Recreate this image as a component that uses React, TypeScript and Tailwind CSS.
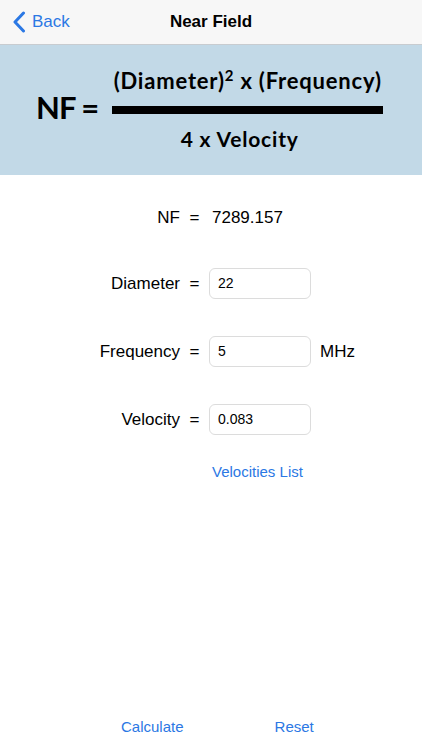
import { useState } from 'react';

const sans = { fontFamily: '"Liberation Sans", Arial, sans-serif' };

function Row({ label, value, unit }: { label: string; value: string; unit?: string }) {
  return (
    <div className="flex items-center h-[31px]">
      <div className="w-[180px] text-right text-[17px] text-black">{label}</div>
      <div className="w-[29px] text-center text-[17px] text-black">=</div>
      <div className="w-[102px] h-[31px] rounded-[6px] border border-[#dcdcdc] bg-white flex items-center px-[8px] text-[14px] text-black">
        {value}
      </div>
      {unit && <div className="ml-[9px] text-[17px] text-black">{unit}</div>}
    </div>
  );
}

export default function App() {
  const [nf] = useState('7289.157');

  return (
    <div className="w-[422px] h-[750px] bg-white flex flex-col overflow-hidden" style={sans}>
      {/* nav bar */}
      <div className="relative h-[45px] bg-[#f7f7f7] border-b border-[#c8ccd0] flex items-center">
        <div className="flex items-center pl-[12px] text-[#2b78e4] text-[17px]">
          <svg width="14" height="22" viewBox="0 0 14 22" fill="none">
            <path d="M11.5 2 L3 11 L11.5 20" stroke="#2b78e4" strokeWidth="3" strokeLinecap="round" strokeLinejoin="round" />
          </svg>
          <span className="ml-[6px]">Back</span>
        </div>
        <div className="absolute inset-x-0 top-0 h-[44px] flex items-center justify-center pointer-events-none text-[17px] font-semibold text-black">
          Near Field
        </div>
      </div>

      {/* formula banner */}
      <div
        className="h-[130px] bg-[#c2d9e7] flex items-start pl-[36px]"
        style={{ fontFamily: 'Lato, "Open Sans", sans-serif' }}
      >
        <div className="mt-[47px] text-[31px] leading-[31px] font-bold text-black tracking-[-1px]">NF =</div>
        <div className="ml-[14px] flex flex-col items-center pt-[25px]">
          <div className="text-[22px] leading-[22px] font-bold text-black tracking-[0.8px] whitespace-nowrap">
            (Diameter)<span className="text-[15px] relative -top-[8px]">2</span> x (Frequency)
          </div>
          <div className="w-[271px] h-[8px] bg-black mt-[12px]" />
          <div className="mt-[14px] mr-[16px] text-[21px] leading-[21px] font-bold text-black tracking-[0.8px]">4 x Velocity</div>
        </div>
      </div>

      {/* fields */}
      <div className="flex flex-col pt-[27px]">
        <div className="flex items-center h-[31px]">
          <div className="w-[180px] text-right text-[17px] text-black">NF</div>
          <div className="w-[29px] text-center text-[17px] text-black">=</div>
          <div className="ml-[3px] text-[17px] text-black">{nf}</div>
        </div>
        <div className="flex flex-col gap-[37px] mt-[35px]">
          <Row label="Diameter" value="22" />
          <Row label="Frequency" value="5" unit="MHz" />
          <Row label="Velocity" value="0.083" />
        </div>
        <div className="mt-[26px] pl-[212px] text-[15px] text-[#2b78e4]">Velocities List</div>
      </div>

      <div className="flex-1" />

      {/* bottom buttons */}
      <div className="flex items-center h-[48px] mb-[-1px] text-[15px] text-[#2b78e4]">
        <div className="ml-[121px]">Calculate</div>
        <div className="ml-[91px]">Reset</div>
      </div>
    </div>
  );
}
